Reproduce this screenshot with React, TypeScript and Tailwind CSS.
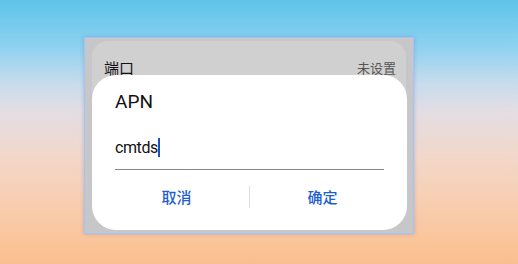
export default function App() {
  return (
    <div className="relative w-[518px] h-[264px] overflow-hidden bg-[linear-gradient(180deg,#5ec4e9_0%,#8fd2f0_18%,#c9dcec_32%,#e3dde3_42%,#f1d8cc_58%,#f8cfb3_75%,#fbbf8d_100%)] font-['Roboto','Noto_Sans_CJK_SC',sans-serif]">
      <div className="absolute left-[84px] top-[37px] w-[330px] h-[197px] bg-[#c7c7c9] border border-[#a9c2ee] shadow-[0_0_4px_rgba(90,130,220,0.45)] overflow-hidden">
        <div className="mx-[7px] mt-[3px] h-[70px] rounded-t-[16px] bg-[#d0d0d0] flex items-start justify-between pl-[12px] pr-[10px] pt-[18px]">
          <span className="text-[15px] leading-[18px] text-[#111] font-['Noto_Sans_CJK_SC',sans-serif]">端口</span>
          <span className="text-[13px] leading-[18px] text-[#555] font-['Noto_Sans_CJK_SC',sans-serif]">未设置</span>
        </div>
        <div className="absolute left-[7px] top-[37px] w-[315px] h-[155px] bg-white rounded-[24px] flex flex-col px-[23px]">
          <div className="mt-[14px] text-[19px] leading-[26px] text-[#111]">APN</div>
          <div className="mt-[20px] flex items-start h-[35px] border-b border-[#858585]">
            <span className="text-[16px] leading-[24px] text-[#111] mt-[1px] tracking-[-0.4px]">cmtds</span>
            <span className="w-[2px] h-[19px] bg-[#1d4fc4] mt-[3px]"></span>
          </div>
          <div className="flex items-center mt-[16px] -mx-[11px]">
            <div className="flex-1 text-center text-[15px] leading-[22px] text-[#1f5fcf] font-['Noto_Sans_CJK_SC',sans-serif] font-medium">取消</div>
            <div className="w-px h-[22px] bg-[#dcdcdc]"></div>
            <div className="flex-1 text-center text-[15px] leading-[22px] text-[#1f5fcf] font-['Noto_Sans_CJK_SC',sans-serif] font-medium">确定</div>
          </div>
        </div>
      </div>
    </div>
  );
}
